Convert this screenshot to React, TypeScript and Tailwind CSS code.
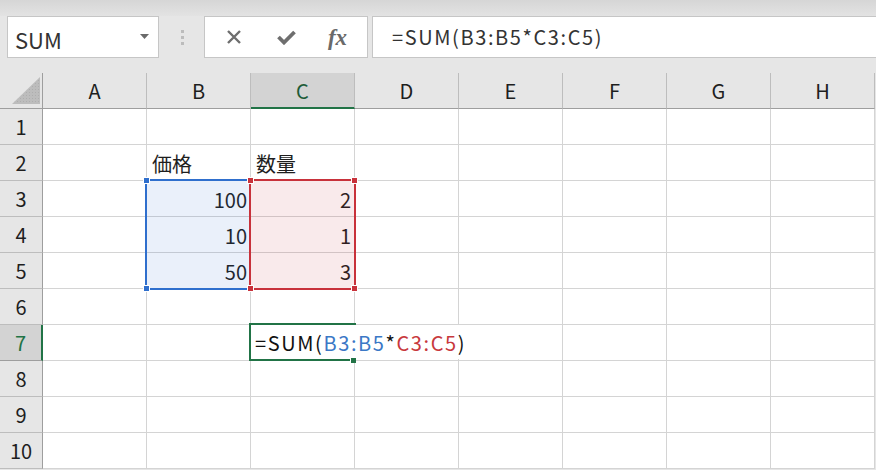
import React from "react";

const COLS = ["A", "B", "C", "D", "E", "F", "G", "H"];
const ROWS = [1, 2, 3, 4, 5, 6, 7, 8, 9, 10];

type CellVal = { text: string; align: "left" | "right" };
const DATA: Record<string, CellVal> = {
  "B2": { text: "価格", align: "left" },
  "C2": { text: "数量", align: "left" },
  "B3": { text: "100", align: "right" },
  "B4": { text: "10", align: "right" },
  "B5": { text: "50", align: "right" },
  "C3": { text: "2", align: "right" },
  "C4": { text: "1", align: "right" },
  "C5": { text: "3", align: "right" },
};

const FONT = '"Noto Sans CJK JP", "Noto Sans", sans-serif';

function Handle({ x, y, color }: { x: number; y: number; color: string }) {
  return (
    <div
      className="absolute w-[7px] h-[7px] border border-white"
      style={{ left: x - 3, top: y - 3, backgroundColor: color }}
    />
  );
}

export default function App() {
  return (
    <div
      className="relative w-[876px] h-[470px] overflow-hidden bg-[#e6e6e6] text-[#1e1e1e]"
      style={{ fontFamily: FONT }}
    >
      {/* top band */}
      <div className="h-[16px] bg-gradient-to-b from-[#d6d6d6] to-[#e3e3e3]" />

      {/* toolbar */}
      <div className="flex h-[42px] items-stretch">
        <div className="ml-[7px] w-[152px] border border-[#c6c6c6] bg-white flex items-center justify-between pl-[7px] pr-[9px]">
          <span className="text-[22px] text-[#333] leading-none mt-[3px]">SUM</span>
          <svg width="9" height="5" viewBox="0 0 9 5" className="mt-[-2px]">
            <path d="M0 0 H9 L4.5 5 Z" fill="#6a6a6a" />
          </svg>
        </div>
        <div className="w-[45px] flex flex-col items-center justify-center gap-[3px] pl-[1px]">
          <div className="w-[3px] h-[3px] bg-[#bcbcbc]" />
          <div className="w-[3px] h-[3px] bg-[#bcbcbc]" />
          <div className="w-[3px] h-[3px] bg-[#bcbcbc]" />
        </div>
        <div className="w-[164px] border border-[#c6c6c6] bg-white flex items-center">
          <div className="w-[55px] flex justify-center pl-[2px]">
            <svg width="16" height="16" viewBox="0 0 16 16">
              <path d="M2 2 L14 14 M14 2 L2 14" stroke="#6e6e6e" strokeWidth="2.4" />
            </svg>
          </div>
          <div className="w-[52px] flex justify-center">
            <svg width="19" height="15" viewBox="0 0 19 15">
              <path d="M1.5 7 L7 12.5 L17.5 2" stroke="#6e6e6e" strokeWidth="3.8" fill="none" />
            </svg>
          </div>
          <div className="flex-1 flex justify-center pr-[4px]">
            <span
              className="italic font-semibold text-[23px] text-[#6a6a6a] leading-none"
              style={{ fontFamily: '"Liberation Serif", "DejaVu Serif", serif' }}
            >
              fx
            </span>
          </div>
        </div>
        <div className="ml-[4px] flex-1 border border-r-0 border-[#c6c6c6] bg-white flex items-center pl-[19px]">
          <span className="text-[20px] text-[#333] leading-none tracking-[1.6px]">=SUM(B3:B5*C3:C5)</span>
        </div>
      </div>

      <div className="h-[15px]" />

      {/* sheet */}
      <div className="relative">
        {/* header row */}
        <div className="flex h-[36px]">
          <div className="relative w-[43px] h-[36px] border-r border-b border-[#9e9e9e] bg-[#e6e6e6]">
            <svg width="30" height="28" viewBox="0 0 30 28" className="absolute left-[11px] top-[4px]">
              <defs>
                <pattern id="dots" width="3" height="3" patternUnits="userSpaceOnUse">
                  <rect width="3" height="3" fill="#bdbdbd" />
                  <rect width="1" height="1" fill="#aeaeae" />
                </pattern>
              </defs>
              <path d="M29 0 V27 H1 Z" fill="url(#dots)" />
            </svg>
          </div>
          {COLS.map((c) => (
            <div
              key={c}
              className={
                c === "C"
                  ? "w-[104px] h-[36px] border-r border-[#bdbdbd] border-b-2 border-b-[#217346] bg-[#d3d3d3] flex items-center justify-center text-[20px] text-[#1d5c38] leading-none"
                  : "w-[104px] h-[36px] border-r border-b border-[#bdbdbd] border-b-[#9e9e9e] bg-[#e6e6e6] flex items-center justify-center text-[20px] leading-none"
              }
            >
              <span className="mt-[1px]">{c}</span>
            </div>
          ))}
        </div>

        {ROWS.map((r) => (
          <div key={r} className="flex h-[36px]">
            <div
              className={
                r === 7
                  ? "w-[43px] h-[36px] border-r-2 border-r-[#217346] border-b border-b-[#9e9e9e] bg-[#d3d3d3] flex items-center justify-center text-[20px] text-[#217346] leading-none"
                  : "w-[43px] h-[36px] border-r border-b border-r-[#9e9e9e] border-b-[#bdbdbd] bg-[#e6e6e6] flex items-center justify-center text-[20px] leading-none"
              }
            >
              <span className="mt-[1px]">{r}</span>
            </div>
            {COLS.map((c) => {
              const v = DATA[c + r];
              return (
                <div
                  key={c}
                  className={
                    "w-[104px] h-[36px] border-r border-b border-[#d4d4d4] bg-white flex items-center text-[20px] leading-none " +
                    (v && v.align === "right" ? "justify-end pr-[3px]" : "justify-start pl-[5px]")
                  }
                >
                  {v ? <span className="mt-[2px]">{v.text}</span> : null}
                </div>
              );
            })}
          </div>
        ))}

        {/* range B3:B5 */}
        <div
          className="absolute border-2 border-[#2f6fcd] bg-[rgba(47,111,205,0.1)]"
          style={{ left: 145, top: 106, width: 106, height: 111 }}
        />
        {/* range C3:C5 */}
        <div
          className="absolute border-2 border-[#c8323b] bg-[rgba(200,50,59,0.1)]"
          style={{ left: 249, top: 106, width: 107, height: 111 }}
        />
        <Handle x={146} y={107} color="#2f6fcd" />
        <Handle x={146} y={215} color="#2f6fcd" />
        <Handle x={250} y={107} color="#c8323b" />
        <Handle x={354} y={107} color="#c8323b" />
        <Handle x={250} y={215} color="#c8323b" />
        <Handle x={354} y={215} color="#c8323b" />

        {/* active cell C7 editing */}
        <div
          className="absolute border-l-2 border-t-2 border-b-2 border-[#217346]"
          style={{ left: 249, top: 250, width: 107, height: 38 }}
        />
        <div
          className="absolute bg-white flex items-center pl-[4px]"
          style={{ left: 251, top: 252, width: 224, height: 34 }}
        >
          <span className="text-[20px] leading-none tracking-[1.6px] mt-[2px]">
            <span className="text-[#111]">=SUM(</span>
            <span className="text-[#3b78c6]">B3:B5</span>
            <span className="text-[#111]">*</span>
            <span className="text-[#c8383c]">C3:C5</span>
            <span className="text-[#111]">)</span>
          </span>
        </div>
        <div className="absolute bg-[#217346] border-l border-white" style={{ left: 350, top: 285, width: 6, height: 5 }} />
      </div>
    </div>
  );
}
